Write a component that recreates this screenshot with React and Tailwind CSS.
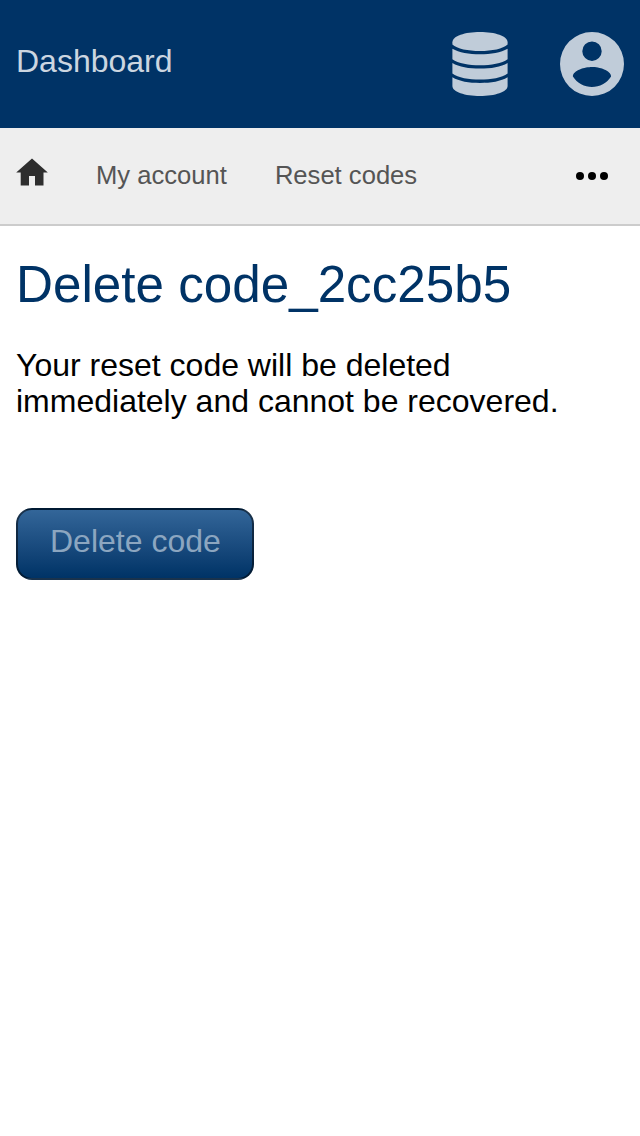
function DatabaseIcon() {
  return (
    <svg className="h-16 w-14" viewBox="0 0 56 64" fill="currentColor" aria-hidden="true">
      <path d="M28 0C13 0 0.400 4 0.400 10.300V12.400C5 16.800 16 18.900 28 18.900C40 18.900 51 16.800 55.600 12.400V10.300C55.600 4 43 0 28 0Z" />
      <path d="M0.400 16.700C7 20.600 17 22.200 28 22.200C39 22.200 49 20.600 55.600 16.700V27.200C50 31.500 39 33.200 28 33.200C17 33.200 6 31.500 0.400 27.200Z" />
      <path d="M0.400 30.900C7 34.900 17 36.500 28 36.500C39 36.500 49 34.900 55.600 30.900V41.400C50 45.700 39 47.500 28 47.500C17 47.500 6 45.700 0.400 41.400Z" />
      <path d="M0.400 45.200C7 49.300 17 50.900 28 50.900C39 50.900 49 49.300 55.600 45.200V54C55.600 60 43 64 28 64C13 64 0.400 60 0.400 54Z" />
    </svg>
  );
}

function AccountIcon() {
  return (
    <svg className="size-16" viewBox="0 0 64 64" fill="currentColor" fillRule="evenodd" aria-hidden="true">
      <path d="M32 0a32 32 0 1 1 0 64a32 32 0 1 1 0-64ZM32 9.500a9.700 9.700 0 1 0 0 19.400a9.700 9.700 0 1 0 0-19.400ZM32 35C25 35 12.900 38.300 12.900 44.500C17 51 24.500 55 32 55C39.500 55 47 51 51.100 44.500C51.100 38.300 39 35 32 35Z" />
    </svg>
  );
}

function HomeIcon() {
  return (
    <svg className="h-7 w-8" viewBox="0 0 32 28" fill="currentColor" aria-hidden="true">
      <path d="M16 0.400L31.800 14.400H27.500V27.600H19V18H13V27.600H4.700V14.400H0.200Z" />
    </svg>
  );
}

function MoreIcon() {
  return (
    <svg className="h-2 w-8" viewBox="0 0 32 8" fill="currentColor" aria-hidden="true">
      <circle cx="4" cy="4" r="4" />
      <circle cx="16" cy="4" r="4" />
      <circle cx="28" cy="4" r="4" />
    </svg>
  );
}

export default function App() {
  return (
    <div className="min-h-screen bg-white font-['Liberation_Sans',Arial,sans-serif] text-black">
      <header className="flex h-32 items-center justify-between bg-[#003366] px-4 text-[#c0ccd9]">
        <a href="#" className="pb-1.5 text-[32px] leading-9 text-[#ccd6e0]">Dashboard</a>
        <div className="flex gap-[52px]">
          <a href="#" aria-label="Data"><DatabaseIcon /></a>
          <a href="#" aria-label="Account"><AccountIcon /></a>
        </div>
      </header>
      <nav className="flex h-[98px] items-center border-b-2 border-[#cccccc] bg-[#eeeeee] pr-8 pl-4 text-[25.6px] leading-[30px] text-[#555555]">
        <a href="#" aria-label="Home" className="mr-12 pb-2 text-[#2e2e2e]"><HomeIcon /></a>
        <a href="#" className="mr-12 pb-0.5">My account</a>
        <a href="#" className="pb-0.5">Reset codes</a>
        <button aria-label="More" className="ml-auto text-black"><MoreIcon /></button>
      </nav>
      <main className="px-4 pt-[30px]">
        <h1 className="text-[51.2px] leading-[58px] text-[#003366]">Delete code_2cc25b5</h1>
        <p className="mt-[33px] text-[32px] leading-9">
          Your reset code will be deleted<br />immediately and cannot be recovered.
        </p>
        <button className="mt-[89px] flex h-[72px] w-[238px] rounded-2xl border-2 border-black/50 bg-linear-to-b from-[#336699] to-[#003366] pt-[13px] pl-8 text-[32px] leading-9 whitespace-nowrap text-[#8ca6c0]">
          Delete code
        </button>
      </main>
    </div>
  );
}
